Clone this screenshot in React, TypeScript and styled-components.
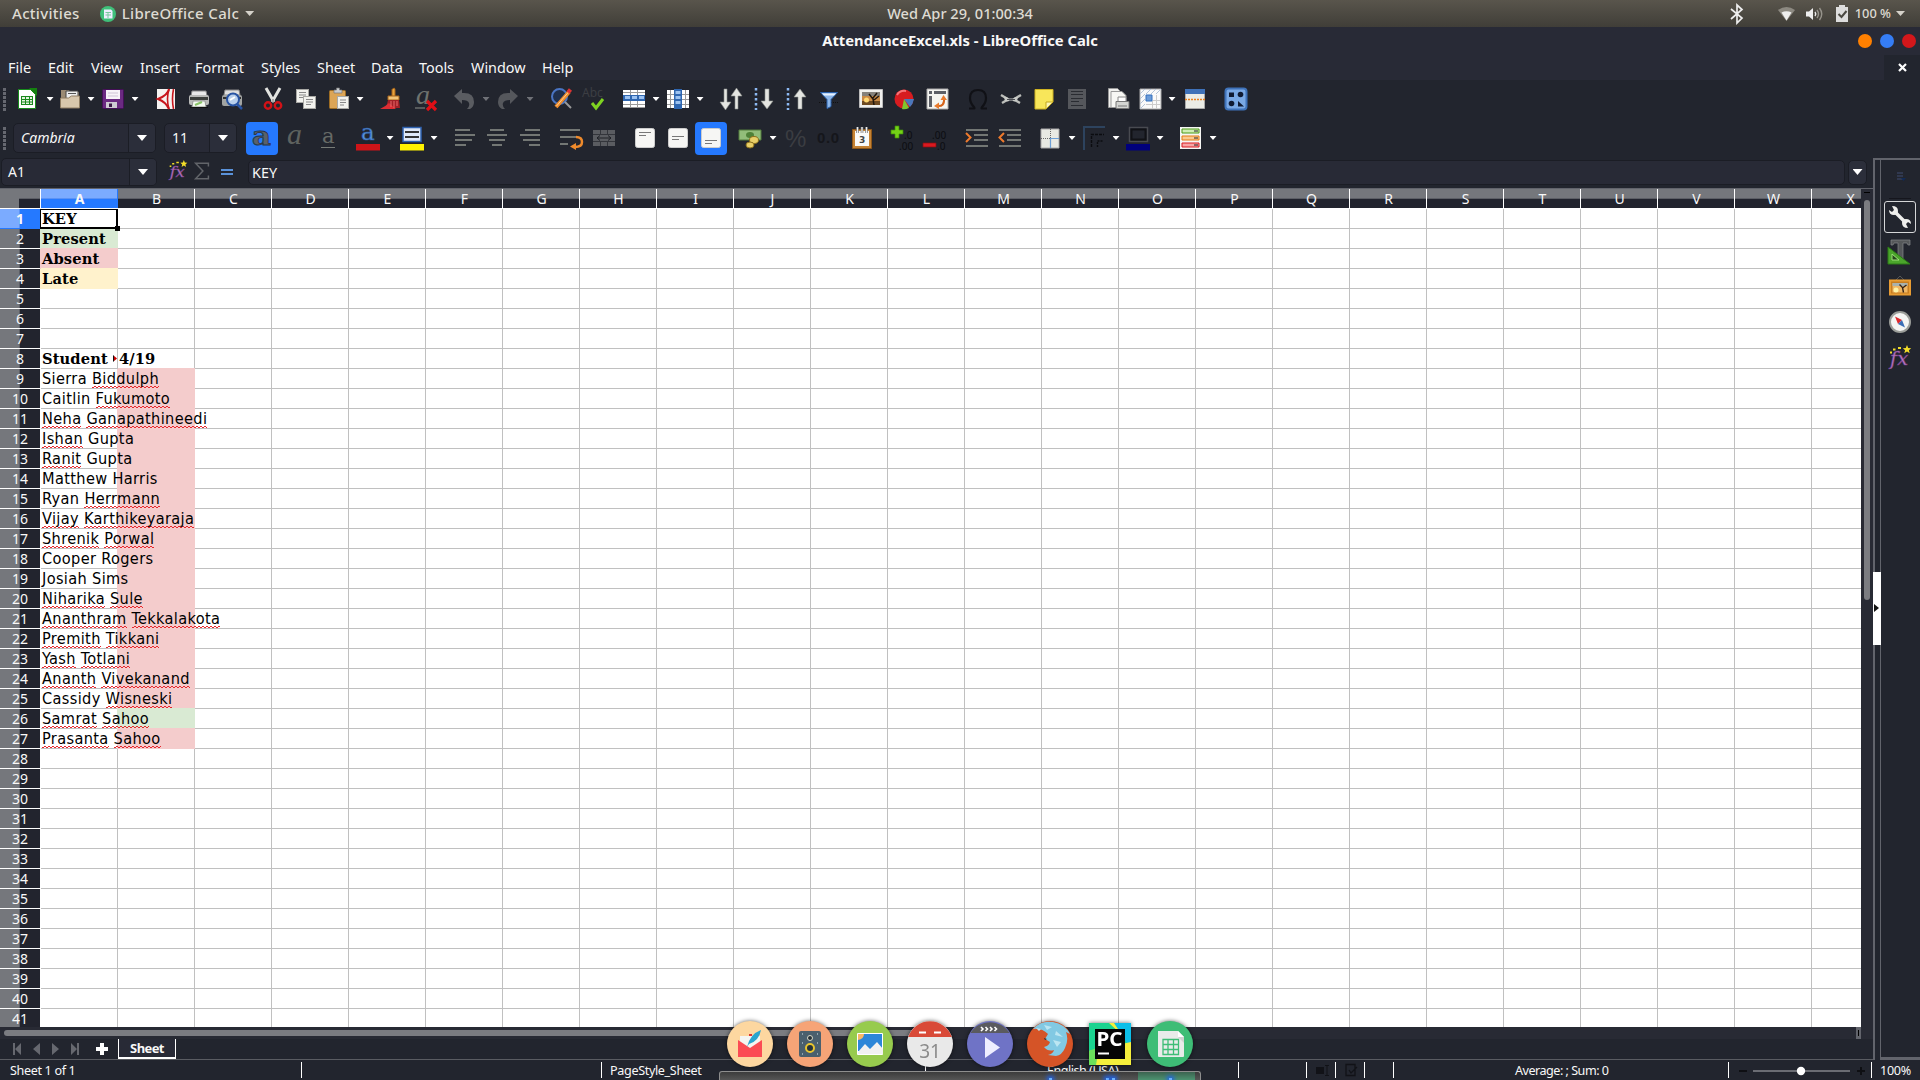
import React from "react";
import styled, { createGlobalStyle, css } from "styled-components";

const ui = `"Noto Sans", "Open Sans", sans-serif`;

const Global = createGlobalStyle`
  * { box-sizing: border-box; }
  body { margin: 0; background: #22252e; overflow: hidden; }
`;

const Desktop = styled.div`
  position: relative;
  width: 1920px;
  height: 1080px;
  overflow: hidden;
  display: flex;
  flex-direction: column;
  background: #22252e;
  color: #f8f8f8;
  font-family: ${ui};
  font-size: 14.6px;
  white-space: pre;
`;

/* ---------- shell bar ---------- */
const ShellBar = styled.header`
  flex: none;
  height: 27px;
  display: grid;
  grid-template-columns: 1fr auto 1fr;
  align-items: center;
  background: linear-gradient(#59554c, #403e38);
  color: #dedbd3;
  font-size: 14px;
  font-weight: 500;
`;
const ShellLeft = styled.div`
  display: flex;
  align-items: center;
  padding-left: 12px;
`;
const ShellText = styled.span<{ $ls?: number; $size?: number }>`
  letter-spacing: ${(p) => p.$ls ?? 0}px;
  font-size: ${(p) => p.$size ?? 14}px;
  line-height: 22px;
  margin-top: -1px;
`;
const ShellRight = styled.div`
  display: flex;
  align-items: center;
  justify-content: flex-end;
  padding-right: 15px;
`;
const Spacer = styled.span<{ $w: number }>`
  flex: none;
  width: ${(p) => p.$w}px;
`;
const Caret = styled.i<{ $w?: number; $h?: number; $c?: string }>`
  flex: none;
  width: ${(p) => p.$w ?? 8}px;
  height: ${(p) => p.$h ?? 5}px;
  background: ${(p) => p.$c ?? "#fff"};
  clip-path: polygon(0 0, 100% 0, 50% 100%);
`;

/* ---------- title and menus ---------- */
const TitleBar = styled.div`
  flex: none;
  height: 28px;
  display: grid;
  grid-template-columns: 1fr auto 1fr;
  align-items: center;
  background: #282a36;
  font-size: 14.8px;
  line-height: 20px;
  font-weight: 700;
`;
const TitleText = styled.span`
  margin-top: -2px;
`;
const Lights = styled.div`
  display: flex;
  justify-content: flex-end;
  gap: 8px;
  padding-right: 4px;
`;
const Light = styled.span<{ $c: string }>`
  width: 14px;
  height: 14px;
  border-radius: 50%;
  background: ${(p) => p.$c};
`;
const MenuBar = styled.nav`
  flex: none;
  height: 25px;
  display: flex;
  align-items: center;
  padding-left: 8px;
  background: #282a36;
`;
const MenuItem = styled.span<{ $w: number }>`
  flex: none;
  width: ${(p) => p.$w}px;
  font-size: 14.4px;
`;
const CloseDoc = styled.span`
  margin-left: auto;
  width: 36px;
  height: 25px;
  display: grid;
  place-items: center;
  background: #22252e;
`;

/* ---------- toolbars ---------- */
const ToolBar = styled.div<{ $h: number }>`
  flex: none;
  height: ${(p) => p.$h}px;
  display: flex;
  align-items: center;
  background: #22252e;
`;
const Grip = styled.span<{ $gap: number }>`
  flex: none;
  width: 3px;
  height: 23px;
  margin: 0 ${(p) => p.$gap}px 0 3px;
  background: repeating-linear-gradient(#666870 0 3px, transparent 3px 4px);
`;
const Tool = styled.span<{ $gap: number }>`
  flex: none;
  width: 24px;
  height: 24px;
  margin-left: ${(p) => p.$gap}px;
  svg { display: block; overflow: visible; }
`;
const Drop = styled.span<{ $gap: number; $dim?: boolean }>`
  flex: none;
  width: 8px;
  display: flex;
  justify-content: center;
  margin-left: ${(p) => p.$gap}px;
  opacity: ${(p) => (p.$dim ? 0.35 : 1)};
`;
const Pressed = styled.span<{ $gap: number }>`
  flex: none;
  width: 32px;
  height: 33px;
  display: grid;
  place-items: center;
  margin-left: ${(p) => p.$gap}px;
  border-radius: 4px;
  background: #2579ff;
  svg { display: block; overflow: visible; }
`;
const Combo = styled.span<{ $w: number; $gap?: number; $h?: number; $btn?: number }>`
  flex: none;
  width: ${(p) => p.$w}px;
  height: ${(p) => p.$h ?? 30}px;
  margin-left: ${(p) => p.$gap ?? 0}px;
  display: grid;
  grid-template-columns: 1fr ${(p) => p.$btn ?? 27}px;
  border: 1px solid #1b1d25;
  border-radius: 5px;
  background: #282a36;
`;
const ComboText = styled.span<{ $italic?: boolean; $pad?: number }>`
  display: flex;
  align-items: center;
  padding-left: ${(p) => p.$pad ?? 7}px;
  font-size: 14px;
  line-height: 20px;
  padding-bottom: 1px;
  font-style: ${(p) => (p.$italic ? "italic" : "normal")};
`;
const ComboButton = styled.span`
  display: flex;
  align-items: center;
  justify-content: center;
  border-left: 1px solid #1b1d25;
  background: #2b2e3a;
  border-radius: 0 4px 4px 0;
`;

/* ---------- work area ---------- */
const Work = styled.div`
  flex: none;
  height: 902px;
  display: flex;
`;
const Left = styled.div`
  width: 1873px;
  display: flex;
  flex-direction: column;
`;
const FormulaBar = styled.div`
  flex: none;
  height: 30px;
  display: flex;
  align-items: center;
  padding: 0 0 1px 1px;
  border-bottom: 1px solid #22252e;
`;
const FormulaInput = styled.span`
  width: 1597px;
  height: 25px;
  margin-left: 5px;
  padding-left: 3px;
  display: flex;
  align-items: center;
  border: 1px solid #1b1d25;
  border-radius: 5px;
  background: #282a36;
  font-size: 14.4px;
`;
const Expand = styled.span`
  width: 19px;
  height: 25px;
  margin-left: 3px;
  display: grid;
  place-items: center;
  border: 1px solid #1b1d25;
  border-radius: 5px;
  background: #2b2e3a;
`;
const SheetRow = styled.div`
  flex: none;
  height: 839px;
  display: flex;
`;
const Sheet = styled.div`
  width: 1861px;
  overflow: hidden;
`;
const ColumnHeads = styled.div`
  height: 21px;
  display: flex;
  border-top: 1px solid #62646c;
  border-bottom: 1px solid #fff;
`;
const steel = css`
  background: linear-gradient(#75777c 0 9px, #5c5e65 9px 10px, #22242e 10px);
`;
const Corner = styled.span`
  flex: none;
  width: 41px;
  border-right: 1px solid #fff;
  background: linear-gradient(90deg, #75777c 19px, transparent 19px), linear-gradient(#75777c 0 9px, #5c5e65 9px 10px, #22242e 10px);
`;
const ColumnHead = styled.span<{ $on?: boolean }>`
  flex: none;
  width: 77px;
  padding-left: 1px;
  border-right: 1px solid #fff;
  text-align: center;
  font-size: 14px;
  line-height: 19px;
  ${steel}
  ${(p) => p.$on && css`
    font-weight: 700;
    border-right-color: #2579ff;
    background: linear-gradient(#7babff 0 9px, #5b92f5 9px 10px, #2579ff 10px);
  `}
`;
const LastHead = styled(ColumnHead)`
  width: 49px;
  border: 0;
  padding-left: 28px;
`;
const Body = styled.div`
  height: 819px;
  display: flex;
  overflow: hidden;
`;
const RowHeads = styled.div`
  flex: none;
  width: 41px;
  border-right: 1px solid #fff;
`;
const RowHead = styled.div<{ $on?: boolean }>`
  height: 20px;
  border-bottom: 1px solid #fff;
  text-align: center;
  font-size: 14px;
  line-height: 19px;
  background: linear-gradient(90deg, #75777c 0 19px, #5c5e65 19px 20px, #22242e 20px);
  ${(p) => p.$on && css`
    font-weight: 700;
    border-bottom-color: #2579ff;
    background: linear-gradient(90deg, #7babff 0 19px, #5b92f5 19px 20px, #2579ff 20px);
  `}
`;
const Grid = styled.div`
  flex: 1;
  background:
    repeating-linear-gradient(90deg, transparent 0 76px, #c0c0c0 76px 77px),
    repeating-linear-gradient(transparent 0 19px, #c0c0c0 19px 20px),
    #fff;
  color: #000;
`;
const GridRow = styled.div`
  height: 20px;
  display: flex;
`;
const Cell = styled.div<{ $fill?: string; $head?: boolean }>`
  position: relative;
  width: 77px;
  height: 20px;
  padding-left: 1px;
  ${(p) => p.$fill && css`
    background: ${p.$fill};
    box-shadow: -1px 0 0 ${p.$fill}, 0 -1px 0 ${p.$fill};
  `}
  ${(p) => p.$head
    ? css`font: 700 14.67px/20px "DejaVu Serif", serif; letter-spacing: 0.12px;`
    : css`font: 16.2px/19px "DejaVu Sans Condensed", "DejaVu Sans", sans-serif; font-stretch: condensed; letter-spacing: 0.35px;`}
`;
const CellText = styled.span`
  position: relative;
  z-index: 1;
`;
const Typo = styled.span`
  display: inline-block;
  height: 20px;
  background:
    linear-gradient(90deg, transparent 2px, #e8262c 2px) 0 17px / 4px 1px repeat-x,
    linear-gradient(90deg, #e8262c 2px, transparent 2px) 0 18px / 4px 1px repeat-x;
`;
const Cursor = styled.span`
  position: absolute;
  z-index: 2;
  left: -1px;
  top: 0;
  width: 78px;
  height: 20px;
  border: 2px solid #000;
  border-top-width: 1px;
  border-left-width: 1px;
  &::after {
    content: "";
    position: absolute;
    right: -4px;
    bottom: -4px;
    width: 5px;
    height: 5px;
    background: #000;
  }
`;
const Cut = styled.span`
  position: absolute;
  right: 1px;
  top: 6px;
  width: 4px;
  height: 7px;
  background: linear-gradient(90deg, #111 1px, #c00 1px);
  clip-path: polygon(0 0, 100% 50%, 0 100%);
`;
const VScroll = styled.div`
  width: 12px;
  padding: 3px;
  background: #282a34;
  border-top: 1px solid #62646c;
`;
const SplitMark = styled.div`
  width: 6px;
  height: 1px;
  margin-bottom: 7px;
  background: #000;
`;
const VThumb = styled.div`
  width: 6px;
  height: 400px;
  border-radius: 3px;
  background: #7b7c81;
`;
const HScroll = styled.div`
  flex: none;
  height: 12px;
  display: flex;
  align-items: center;
  padding-left: 4px;
  background: #282a34;
`;
const HThumb = styled.div`
  width: 916px;
  height: 6px;
  border-radius: 3px;
  background: #7b7c81;
`;
const HSplit = styled.div`
  width: 5px;
  height: 12px;
  margin-left: 936px;
  border: solid #62646c;
  border-width: 3px 2px;
  background: #000;
`;
const Tabs = styled.div`
  flex: none;
  height: 21px;
  display: flex;
  border-bottom: 1px solid #5a5c62;
  svg { display: block; }
`;
const Tab = styled.span`
  width: 58px;
  height: 20px;
  border: 1px solid #fff;
  border-top: 0;
  border-bottom-width: 2px;
  background: #282a36;
  text-align: center;
  font-size: 13px;
  font-weight: 700;
  letter-spacing: -0.6px;
  line-height: 19px;
`;

/* ---------- sidebar ---------- */
const Splitter = styled.div`
  width: 8px;
  display: flex;
  flex-direction: column;
  justify-content: center;
  border-top: 2px solid #62646c;
  border-left: 2px solid #62646c;
  border-right: 1px solid #62646c;
`;
const Handle = styled.div`
  width: 8px;
  height: 73px;
  margin: -4px 0 0 -2px;
  display: flex;
  align-items: center;
  padding-left: 1px;
  background: #fff;
`;
const HandleArrow = styled.i`
  width: 5px;
  height: 8px;
  background: #111;
  clip-path: polygon(0 0, 100% 50%, 0 100%);
`;
const SideBar = styled.aside`
  flex: 1;
  display: flex;
  flex-direction: column;
  align-items: center;
  padding-right: 2px;
  border-top: 2px solid #62646c;
  border-bottom: 3px solid #62646c;
  svg { display: block; overflow: visible; }
`;
const SideItem = styled.span<{ $on?: boolean }>`
  flex: none;
  width: 32px;
  height: 32px;
  margin-bottom: 3px;
  display: grid;
  place-items: center;
  border: 1px solid ${(p) => (p.$on ? "#d5d6d8" : "transparent")};
  border-radius: 3px;
`;
const SideMenu = styled.span`
  height: 39px;
  width: 22px;
  margin-bottom: 2px;
  padding: 12px 0 0 8px;
  border-bottom: 1px solid #15161d;
`;

/* ---------- status bar ---------- */
const Status = styled.footer`
  flex: none;
  height: 20px;
  display: flex;
  align-items: center;
  font-size: 12.6px;
`;
const StatusCell = styled.span<{ $w: number; $pad?: number; $last?: boolean; $ls?: number }>`
  flex: none;
  width: ${(p) => p.$w}px;
  height: 16px;
  line-height: 17px;
  padding-left: ${(p) => p.$pad ?? 0}px;
  letter-spacing: ${(p) => p.$ls ?? 0}px;
  border-right: ${(p) => (p.$last ? 0 : 1)}px solid #fff;
  svg { display: block; }
`;

/* ---------- dock floats over the window ---------- */
const Dock = styled.div`
  position: absolute;
  left: 719px;
  top: 1021px;
  width: 482px;
  height: 59px;
  display: flex;
  flex-direction: column;
`;
const DockIcons = styled.div`
  display: flex;
  gap: 14px;
  padding-left: 8px;
  height: 50px;
  svg { display: block; overflow: visible; filter: drop-shadow(0 0 2px rgba(0, 0, 0, 0.6)); }
`;
const Shelf = styled.div`
  height: 9px;
  display: flex;
  justify-content: flex-end;
  padding-right: 5px;
  border: 1px solid #8e8e8e;
  border-bottom: 0;
  border-radius: 3px 3px 0 0;
  background: linear-gradient(#3c3c3c, #555);
`;
const Active = styled.div`
  width: 57px;
  background: linear-gradient(#3c6350, #4c9370);
`;
const Glow = styled.i<{ $x: number }>`
  position: absolute;
  left: ${(p) => p.$x}px;
  bottom: 0;
  width: 3px;
  height: 2px;
  background: #6db2ff;
  box-shadow: 0 0 4px 2px #1c62ee;
`;

const Ico = ({ children, s = 24 }: { children: React.ReactNode; s?: number }) => (
  <svg width={s} height={s} viewBox="0 0 24 24" fill="none">{children}</svg>
);

const page = (x: number, y: number, w: number, h: number) => (
  <rect x={x} y={y} width={w} height={h} fill="#f2f2ee" stroke="#a9a9a5" />
);

const tools: Record<string, React.ReactNode> = {
  new: <><path d="M3.500 2.500h12l5 5v14h-17z" fill="#fff" stroke="#168a1b" /><path d="M14 1h8v8z" fill="#14800f" /><path d="M6 9h12v9H6z" fill="#1b8a1e" /><path d="M7 10h3v2H7zm4 0h3v2h-3zm4 0h2v2h-2zM7 13h3v1.500H7zm4 0h3v1.500h-3zm4 0h2v1.500h-2zM7 15.500h3V17H7zm4 0h3V17h-3zm4 0h2V17h-2z" fill="#e3f4de" /></>,
  open: <><path d="M3 3h8l1 2h9v15H3z" fill="#9b8a73" /><path d="M8 4h12v8H8z" fill="#eee" stroke="#444" /><path d="M10 6.500h8" stroke="#555" /><path d="M2.500 11h8l3-2h8v12h-19z" fill="#d8c7ac" stroke="#8f7d62" /></>,
  save: <><rect x="1.500" y="2.500" width="21" height="19" rx="1" fill="#6b2a82" stroke="#451058" /><path d="M5 3h14v9H5z" fill="#f7f3f8" /><path d="M7 6h10M7 9h10" stroke="#cfc4d6" /><path d="M5 15h11v6H5z" fill="#cfcbd4" /><path d="M8 16.500h3v3.500H8z" fill="#3c1a49" /></>,
  pdf: <><path d="M3 2h18v20H3z" fill="#f6f3f1" /><path d="M15 2q-1 6-11 10 8 3 11 10" stroke="#c8161c" strokeWidth="2" /><path d="M15 2q-3 10 0 20M19.500 2q-2 10 0 20" stroke="#c8161c" strokeWidth="1.600" /></>,
  print: <><path d="M5 4h14l1 5H4z" fill="#e9e9e9" stroke="#888" /><rect x="2" y="8" width="20" height="10" rx="2" fill="#b9bab8" /><path d="M3 10h18v3H3z" fill="#3c3f3c" /><path d="M6 14h12l1 6H5z" fill="#f4fbf0" stroke="#999" /><path d="M8 18l7-3" stroke="#8cc56b" strokeWidth="2" /><path d="M3 20.500h18" stroke="#111" /></>,
  preview: <><path d="M5 3h14l1 5H4z" fill="#dedede" stroke="#888" /><rect x="2" y="8" width="20" height="11" rx="2" fill="#a2a4a2" /><path d="M3 10h18v2H3z" fill="#333" /><circle cx="13" cy="12.500" r="6" fill="#b8cfec" stroke="#2753a3" strokeWidth="2" /><path d="M17 17l5 5" stroke="#2753a3" strokeWidth="2.500" /><path d="M10 13l5-3" stroke="#fff" strokeWidth="2" /></>,
  cut: <><path d="M5 1l8 14M19 1l-8 14" stroke="#e2e3e0" strokeWidth="3" /><path d="M12 12v3" stroke="#777" /><circle cx="7" cy="18.500" r="3.200" stroke="#d11217" strokeWidth="2.400" /><circle cx="17" cy="18.500" r="3.200" stroke="#d11217" strokeWidth="2.400" /></>,
  copy: <>{page(2.5, 2.5, 12, 13)}<path d="M5 5.500h7M5 8h7M5 10.500h5" stroke="#888" />{page(9.5, 9.5, 12, 12)}<path d="M12 12.500h7M12 15h7M12 17.500h5" stroke="#888" /></>,
  paste: <><rect x="2.500" y="3.500" width="16" height="18" rx="1" fill="#dca556" stroke="#9d6c22" /><path d="M7 5V3h2.500V1h3v2H15v3H7z" fill="#c9ccd0" stroke="#777" strokeWidth=".7" />{page(10.5, 9.5, 11, 12)}<path d="M13 13h6M13 15.500h6M13 18h4" stroke="#888" /></>,
  brush: <><path d="M14 1.500q2-1 2 1v7h-3v-7z" fill="#e9a33b" stroke="#a8651b" /><path d="M9 9h11v4H9z" fill="#f3c477" stroke="#a8651b" /><path d="M9 13h11l1 8H7z" fill="#a12027" /><path d="M1 22q6-3 9-6l7 6z" fill="#dc2d33" /><path d="M12 14v6M15 14v7M18 14v5" stroke="#e8686a" /></>,
  clear: <><text x="2" y="17" fontFamily="Liberation Serif" fontStyle="italic" fontSize="28" fill="#6f736e">a</text><path d="M1 21h10" stroke="#8b908a" /><path d="M13 14l9 9M22 14l-9 9" stroke="#e00f16" strokeWidth="3.200" /></>,
  undo: <path d="M2 9l8-7v4q12-1 12 9 0 5-4 7h-3q3-3 2-6t-7-3v4z" fill="#5a5c61" />,
  redo: <path d="M22 9l-8-7v4q-12-1-12 9 0 5 4 7h3q-3-3-2-6t7-3v4z" fill="#55575c" />,
  find: <><circle cx="9.500" cy="9.500" r="7.500" fill="#20304d" stroke="#4a75c4" strokeWidth="2" /><path d="M15 15l6 6" stroke="#999" strokeWidth="2" /><path d="M6 20L19 5" stroke="#ef8c2c" strokeWidth="4" /><path d="M6.500 19L19 4.500" stroke="#ffcf92" /><path d="M18 5.500l2.500-3" stroke="#d33" strokeWidth="4" /></>,
  spell: <><text x="0" y="10" fontFamily="Noto Sans" fontSize="12" fill="#3c3e43">Abc</text><path d="M10 16l4 5 7-9" stroke="#7ed321" strokeWidth="3" /></>,
  row: <><path d="M1 3h22v18H1z" fill="#fff" /><path d="M1 8h22v6H1z" fill="#2f67b1" /><path d="M3 9h5v3H3zm7 0h5v3h-5zm7 0h5v3h-5z" fill="#9cc2f0" /><path d="M1 5.500h22M1 17.500h22M1 20.500h22M8.500 3v5M15.500 3v5M8.500 14v7M15.500 14v7" stroke="#999" /></>,
  col: <><path d="M1 3h22v18H1z" fill="#fff" /><path d="M8 2h8v20H8z" fill="#2f67b1" /><path d="M9.500 4h5v3h-5zm0 5h5v3h-5zm0 5h5v3h-5z" fill="#9cc2f0" /><path d="M1 7.500h7M1 12.500h7M1 17.500h7M16 7.500h7M16 12.500h7M16 17.500h7M4.500 3v18M19.500 3v18" stroke="#999" /></>,
  sort: <path d="M5 2h3v13h4l-5.500 8L1 15h4zM16 22h3V9h4l-5.500-8L12 9h4z" fill="#e4e5e1" stroke="#8c8e89" strokeWidth=".6" />,
  asc: <><path d="M4 1v22" stroke="#8cb9f2" strokeWidth="2.500" strokeDasharray="2.500 2.500" /><path d="M13 2h4v12h4l-6 8-6-8h4z" fill="#e4e5e1" stroke="#8c8e89" strokeWidth=".6" /></>,
  desc: <><path d="M3 1v22" stroke="#8cb9f2" strokeWidth="2.500" strokeDasharray="2.500 2.500" /><path d="M13 22h4V10h4l-6-8-6 8h4z" fill="#e4e5e1" stroke="#8c8e89" strokeWidth=".6" /></>,
  filter: <><path d="M2 15.500h20" stroke="#111" strokeDasharray="1 1" /><path d="M3.500 5.500h17l-6.500 7v7l-4 2v-9z" fill="#8db7ea" stroke="#2b62ad" /><path d="M5 6.500h14l-2 2H7z" fill="#e6f1ff" /></>,
  image: <><path d="M.5 2.500h23v18H.5z" fill="#f0f0ee" stroke="#bbb" /><path d="M3 5h18v13H3z" fill="#c98a45" /><path d="M3 5h18v4H3z" fill="#85827c" /><path d="M3 14h18v4H3z" fill="#6e4a22" /><circle cx="7.500" cy="13" r="2.500" fill="#ffd873" /><path d="M15 18l-1-6-4-5M14 11l4-5M15 13l5-4" stroke="#20160e" strokeWidth="1.500" /></>,
  chart: <><circle cx="12" cy="12" r="9.500" fill="#d71c20" /><path d="M12 12h10q-1 5-4 8z" fill="#4a78bd" /><path d="M12 12l5 9q-4 2-7 1z" fill="#7ec82e" /><path d="M5 8q3-5 9-4" stroke="#f67478" strokeWidth="2" /></>,
  pivot: <><path d="M2 2h21v20H2z" fill="#f5f5f1" stroke="#aaa" /><path d="M4 4h3v3H4zM9 4h12v3H9zM4 9h3v11H4z" fill="#5c5f66" /><path d="M12 19q8 1 7-8" stroke="#d5631a" strokeWidth="2" /><path d="M15.500 13l3-5 3.500 5zM14 15.500V22l-5-3z" fill="#e87a2c" /></>,
  omega: <path d="M3 21.500h5q1 0 0-1.500Q4 16 4 11q0-8 8-8t8 8q0 5-4 9-1 1.500 0 1.500h5" stroke="#101116" strokeWidth="2.200" />,
  link: <><path d="M2 8l5 3M22 8l-5 3M3 16l5-3M21 16l-5-3" stroke="#bcbeba" strokeWidth="2.400" /><path d="M5 10q3-1 5 1.500h4q2-2.500 5-1.500l-1 4q-3 1-4.500-.5h-3Q9 15 6 14z" fill="#c9cbc7" /><path d="M8 12.500h8" stroke="#4c4e53" /></>,
  note: <><path d="M3 2.500h18V15l-7 7H3z" fill="#f8e65a" stroke="#cfb321" /><path d="M14 22v-7h7z" fill="#fdf6b5" stroke="#c4a71c" /></>,
  header: <><path d="M3 2h18v20H3z" fill="#55575c" /><path d="M6 4.500h12M6 7.500h12M6 11.500h12M6 14.500h8M6 18.500h12" stroke="#2a2c32" strokeWidth="1.200" /></>,
  area: <><path d="M2.500 1.500h9l4 4v15h-13z" fill="#f1f1ee" stroke="#999" /><path d="M5 4.500h11l4 4v12H5z" fill="#f7f7f4" stroke="#999" /><path d="M12 10h8v5h-8z" fill="#fff" stroke="#888" /><path d="M10 14.500h13v7H10z" fill="#d4d5d2" stroke="#777" /><path d="M12 19h9" stroke="#777" /></>,
  freeze: <><path d="M2 2h21v20H2z" fill="#fafafa" stroke="#aaa" /><path d="M2 7l5-5M2 12l5-5M2 17l5-5M2 22l5-5M8 7l5-5M13 7l5-5M18 7l5-5" stroke="#b4c4d8" /><path d="M8 8h6v6H8z" fill="#6b9bd8" stroke="#3570be" /><path d="M15 13.500h8M8 17.500h15M14.500 14v8M18.500 8v14" stroke="#ccc" /></>,
  split: <><path d="M2.500 2.500h19v19h-19z" fill="#ebece6" stroke="#aaa" /><path d="M2 2h20v5H2z" fill="#3e71b8" /><path d="M2 12.500h20" stroke="#e8801e" strokeDasharray="2 1" strokeWidth="1.500" /></>,
  shapes: <><rect x="1.500" y="1.500" width="21" height="21" rx="3" fill="#7aa9e5" stroke="#3f73ba" strokeWidth="2" /><path d="M5 5.500h5V10H5zM14 14l6 5.500h-6z" fill="#101b33" /><circle cx="16.500" cy="7.500" r="2.800" fill="#101b33" /><circle cx="7.500" cy="16.500" r="2.800" fill="#101b33" /></>,
  italic: <text x="4" y="18" fontFamily="Liberation Serif" fontStyle="italic" fontSize="30" fill="#5e625f">a</text>,
  under: <><text x="6" y="17" fontFamily="DejaVu Serif" fontSize="21" fill="#666a66">a</text><path d="M5 21.500h14" stroke="#777b77" /></>,
  color: <><text x="5" y="14" fontFamily="DejaVu Serif" fontSize="23" fill="#5b93dc" stroke="#2d5c9f" strokeWidth=".6">a</text><path d="M0 18h24v6.500H0z" fill="#cf1418" /></>,
  mark: <><rect x="3" y="1.500" width="18" height="14" fill="#dfe9f8" stroke="#2f62b0" strokeWidth="1.500" /><path d="M5 6h14M5 11h14" stroke="#333" strokeWidth="1.800" /><path d="M0 18h24v6.500H0z" fill="#fff200" /></>,
  left: <path d="M2 4h15M2 9h20M2 14h17M2 19h11" stroke="#8e928c" strokeWidth="1.700" />,
  center: <path d="M5 4h14M2 9h20M4 14h16M7 19h10" stroke="#8e928c" strokeWidth="1.700" />,
  right: <path d="M7 4h15M2 9h20M5 14h17M11 19h11" stroke="#8e928c" strokeWidth="1.700" />,
  wrap: <><path d="M1 4h20M1 11h16M1 18h8" stroke="#8e928c" strokeWidth="1.700" /><path d="M17 11q6 0 6 5t-7 5" stroke="#ee8a2c" strokeWidth="2.500" /><path d="M17 17v7l-6-3.500z" fill="#ee8a2c" /></>,
  merge: <><path d="M1 4h22v16H1z" fill="#5a5c61" /><path d="M1 8.500h22M1 15.500h22M8.500 4v4M15.500 4v4M8.500 16v4M15.500 16v4" stroke="#33353b" /><path d="M5 12h14M8 9.500L5 12l3 2.500M16 9.500l3 2.500-3 2.500" stroke="#1f2127" /></>,
  top: <><rect x="2.500" y="2.500" width="19" height="19" rx="2" fill="#f6f6f4" stroke="#ccc" /><path d="M6 6.500h12M6 9.500h7" stroke="#777" /></>,
  middle: <><rect x="2.500" y="2.500" width="19" height="19" rx="2" fill="#f6f6f4" stroke="#ccc" /><path d="M6 10.500h12M6 13.500h7" stroke="#777" /></>,
  bottom: <><rect x="2.500" y="2.500" width="19" height="19" rx="2" fill="#f6f6f4" stroke="#ccc" /><path d="M6 14.500h12M6 17.500h7" stroke="#777" /></>,
  money: <><path d="M1 4h22v10H1z" fill="#92bd7a" stroke="#527d3c" /><ellipse cx="12" cy="9" rx="4" ry="3" fill="#4f8138" /><ellipse cx="16" cy="14" rx="4.500" ry="3.500" fill="#e9cf68" stroke="#8b6f1d" /><ellipse cx="12" cy="19" rx="4" ry="3" fill="#e9cf68" stroke="#8b6f1d" /></>,
  percent: <text x="1" y="21" fontFamily="Liberation Sans" fontSize="24" fill="#3b3d42">%</text>,
  number: <text x="1" y="17" fontFamily="Liberation Sans" fontSize="15" fontWeight="700" fill="#15161b" textLength="22">0.0</text>,
  date: <><path d="M2.500 3.500h19v19h-19z" fill="#c68334" stroke="#8d5618" /><path d="M5 5h14v15H5z" fill="#fafaf8" /><path d="M7.500 1v6M12 1v6M16.500 1v6" stroke="#777" strokeWidth="2.600" /><path d="M7.500 1v6M12 1v6M16.500 1v6" stroke="#eee" strokeWidth="1.200" /><text x="9" y="17" fontFamily="DejaVu Sans" fontWeight="700" fontSize="9" fill="#444">3</text></>,
  addDec: <><path d="M5 0h4v4h4v4H9v4H5V8H1V4h4z" fill="#74d216" stroke="#3d8c06" strokeWidth=".7" /><text x="14" y="13" fontSize="10" fill="#0c0d11" fontFamily="Noto Sans">.0</text><text x="9" y="24" fontSize="10" fill="#0c0d11" fontFamily="Noto Sans">.00</text></>,
  delDec: <><path d="M0 17h13v4H0z" fill="#d91920" stroke="#8c0b10" strokeWidth=".7" /><text x="9" y="13" fontSize="10" fill="#0c0d11" fontFamily="Noto Sans">.00</text><text x="14" y="24" fontSize="10" fill="#0c0d11" fontFamily="Noto Sans">.0</text></>,
  indent: <><path d="M1 4h22M9 9h14M9 14h14M1 20h22" stroke="#8e928c" strokeWidth="1.700" /><path d="M1 7l4.500 4.500L1 16" stroke="#ee7a2c" strokeWidth="2" /></>,
  outdent: <><path d="M1 4h22M9 9h14M9 14h14M1 20h22" stroke="#8e928c" strokeWidth="1.700" /><path d="M6 7l-4.500 4.500L6 16" stroke="#ee7a2c" strokeWidth="2" /></>,
  border: <><path d="M3 3h18v19H3z" fill="#e8e9e3" stroke="#aaa" /><path d="M3 12.500h9M12.500 3v9" stroke="#666" strokeDasharray="1 1" /><path d="M12.500 22v-9.500H21" stroke="#6d9fd6" strokeWidth="1.200" /></>,
  line: <><path d="M2 24V1h21" stroke="#2d435e" strokeWidth="2" /><path d="M9.500 21V8.500H22" stroke="#0b0c10" strokeWidth="1.400" strokeDasharray="3 1" /><path d="M15.500 21v-6H21" stroke="#0b0c10" strokeWidth="1.400" strokeDasharray="2 1" /></>,
  edge: <><path d="M3.500 1.500h18v14h-18z" fill="#22252e" stroke="#484a50" strokeWidth="1.500" /><path d="M5.500 3.500h14v10h-14z" stroke="#111216" strokeWidth="2" /><path d="M0 18h24v6.500H0z" fill="#00007c" /></>,
  cond: <><path d="M2 1h21v22H2z" fill="#f6f6f4" /><path d="M4 3h17v4H4z" fill="#cfeeb5" stroke="#4d9a17" /><path d="M4 10h17v4H4z" fill="#fbc98f" stroke="#e37a14" /><path d="M4 17h17v4H4z" fill="#f8a5a5" stroke="#d91c22" /><path d="M16 5h4M16 12h4M16 19h4" stroke="#222" /></>,
  bold: <text x="2" y="19" fontFamily="DejaVu Serif" fontWeight="700" fontSize="26" fill="#59616a" stroke="#273447" strokeWidth=".8" textLength="19" lengthAdjust="spacingAndGlyphs">a</text>,
  fx: <><text x="2" y="20" fontFamily="DejaVu Serif" fontStyle="italic" fontSize="18" fill="#b87cc4" stroke="#7b3f89" strokeWidth=".5" textLength="18" lengthAdjust="spacingAndGlyphs">fx</text><path d="M2 7.500h2M5 4.500h2.500M10 3h3" stroke="#f3dd28" strokeWidth="2" /><path d="M19 0l1.200 3 3 .3-2.300 2 .8 3L19 6.600 16.300 8.300l.8-3-2.300-2 3-.3z" fill="#f3dd28" /></>,
  sigma: <path d="M19 7V3.500H5L13 12 5 20.500h14V17" stroke="#62656a" strokeWidth="1.600" />,
  equals: <path d="M3 9h18M3 15h18" stroke="#5a92da" strokeWidth="3" />,
};

type Item = [string, number] | [string, number, "dim"];
const standard: Item[] = [
  ["new", 6], ["v", 7], ["open", 4], ["v", 5], ["save", 6], ["v", 6], ["pdf", 15], ["print", 9], ["preview", 9],
  ["cut", 17], ["copy", 9], ["paste", 9], ["v", 5], ["brush", 15], ["clear", 11], ["undo", 14], ["v", 6, "dim"],
  ["redo", 6], ["v", 6, "dim"], ["find", 16], ["spell", 8], ["row", 16], ["v", 6], ["col", 6], ["v", 6], ["sort", 15],
  ["asc", 9], ["desc", 9], ["filter", 8], ["image", 18], ["chart", 9], ["pivot", 9], ["omega", 17], ["link", 9],
  ["note", 9], ["header", 9], ["area", 17], ["freeze", 8], ["v", 6], ["split", 7], ["shapes", 17],
];
const formatting: Item[] = [
  ["bold!", 9], ["italic", 5], ["under", 9], ["color", 16], ["v", 6], ["mark", 6], ["v", 6], ["left", 15],
  ["center", 8], ["right", 9], ["wrap", 17], ["merge", 9], ["top", 17], ["middle", 9], ["bottom!", 5], ["money", 11],
  ["v", 7], ["percent", 7], ["number", 8], ["date", 10], ["addDec", 16], ["delDec", 9], ["indent", 18],
  ["outdent", 9], ["border", 16], ["v", 6], ["line", 6], ["v", 6], ["edge", 6], ["v", 6], ["cond", 14], ["v", 7],
];

const Tools = ({ items }: { items: Item[] }) => (
  <>
    {items.map(([name, gap, dim], i) =>
      name === "v" ? (
        <Drop key={i} $gap={gap} $dim={!!dim}><Caret $w={7} $h={4} /></Drop>
      ) : name.endsWith("!") ? (
        <Pressed key={i} $gap={gap}><Ico>{tools[name.slice(0, -1)]}</Ico></Pressed>
      ) : (
        <Tool key={i} $gap={gap}><Ico>{tools[name]}</Ico></Tool>
      )
    )}
  </>
);

const menus: [string, number][] = [
  ["File", 40], ["Edit", 43], ["View", 49], ["Insert", 55], ["Format", 66], ["Styles", 56],
  ["Sheet", 54], ["Data", 48], ["Tools", 52], ["Window", 71], ["Help", 40],
];

const red = "#f4cccc", green = "#d9ead3", yellow = "#fff2cc";

/* Words wrapped in underscores are flagged by the spell checker. */
const students = [
  "Sierra _Biddulph_", "Caitlin _Fukumoto_", "_Neha_ _Ganapathineedi_", "_Ishan_ Gupta", "_Ranit_ Gupta",
  "Matthew Harris", "Ryan _Herrmann_", "_Vijay_ _Karthikeyaraja_", "_Shrenik_ _Porwal_", "Cooper Rogers",
  "Josiah Sims", "_Niharika_ _Sule_", "_Ananthram_ _Tekkalakota_", "_Premith_ _Tikkani_", "_Yash_ _Totlani_",
  "_Ananth_ _Vivekanand_", "Cassidy _Wisneski_", "_Samrat_ _Sahoo_", "_Prasanta_ _Sahoo_",
];
const Name = ({ text }: { text: string }) => (
  <CellText>
    {text.split("_").map((part, i) => (i % 2 ? <Typo key={i}>{part}</Typo> : part))}
  </CellText>
);

const Nav = () => (
  <svg width="118" height="20" viewBox="0 0 118 20">
    <path d="M13 4h2v12h-2zM21 4v12l-6-6zM40 4v12l-7-6zM52 4v12l7-6zM71 4v12l6-6zM77 4h2v12h-2z" fill="#66686f" />
    <path d="M100 4h4v4h4v4h-4v4h-4v-4h-4V8h4z" fill="#fff" />
  </svg>
);

const Disc = ({ c, children }: { c: string; children: React.ReactNode }) => (
  <svg width="46" height="46" viewBox="0 0 46 46"><circle cx="23" cy="23" r="23" fill={c} />{children}</svg>
);

const DockApps = () => (
  <DockIcons>
    <Disc c="#fdd7a0">
      <path d="M13 15h20v14H13z" fill="#f5f5f2" /><path d="M11 19l12 8 12-8v17H11z" fill="#fb4b54" />
      <path d="M22 14h3" stroke="#d33" strokeWidth="2" /><path d="M20 26q3-13 14-17-2 11-12 14z" fill="#2aa5cf" />
    </Disc>
    <Disc c="#f6a477">
      <rect x="12" y="10" width="22" height="26" rx="2" fill="#4a5f6d" />
      <circle cx="23" cy="17" r="2.500" fill="#26323a" stroke="#d9d9c8" />
      <circle cx="23" cy="27" r="4" fill="#26323a" stroke="#e9c52f" strokeWidth="2" />
      <path d="M15 13h1M30 13h1M15 33h1M30 33h1M15 22h1M30 22h1" stroke="#91a3ad" strokeWidth="2" />
    </Disc>
    <Disc c="#97cb4e">
      <rect x="10" y="12" width="26" height="22" rx="1" fill="#fff" /><path d="M11 13h24v17H11z" fill="#2c86d8" />
      <path d="M11 13h6q0 5-6 6z" fill="#f8b765" /><path d="M11 31l7-8 5 5 7-7 6 7v5H11z" fill="#f1f1f1" />
    </Disc>
    <svg width="46" height="46" viewBox="0 0 46 46">
      <circle cx="23" cy="23" r="23" fill="#e9e9e9" /><path d="M1.200 16a23 23 0 0 1 43.600 0z" fill="#d94a38" />
      <path d="M12 11.500h7M27 11.500h7" stroke="#fff" strokeWidth="2" />
      <text x="23" y="37" textAnchor="middle" fontFamily="Noto Sans" fontSize="19" fill="#8b8b8b">31</text>
    </svg>
    <svg width="46" height="46" viewBox="0 0 46 46">
      <circle cx="23" cy="23" r="23" fill="#6f73c6" /><path d="M3.500 12a23 23 0 0 1 39 0z" fill="#5a5a5f" />
      <path d="M14 6l2 2-2 2M18.500 6l2 2-2 2M23 6l2 2-2 2M27.500 6l2 2-2 2" stroke="#fff" strokeWidth="1.600" fill="none" />
      <path d="M18 16l15 10.500L18 37z" fill="#eef" />
    </svg>
    <Disc c="#d55427">
      <path d="M6 8Q14-1 26 1q12 2 17 12l-4-2q3 8-1 16-3 7-9 8l-8-1q5-1 6-5-6 2-10-3 5-1 6-5l-5-3 3-5q-6-6-15-5z" fill="#82c9e3" />
      <path d="M9 7l5 1-2 2zM17 4l8 2-5 3zM29 10l7 6-8-2zM26 19l8 2-4 5z" fill="#bce6f2" />
      <path d="M17 17l3 1-2 1z" fill="#222" />
    </Disc>
    <svg width="46" height="46" viewBox="0 0 46 46">
      <path d="M2 2h42v42H2z" fill="#1bd390" /><path d="M27 2h17v26z" fill="#0dbfe9" /><path d="M22 2h5l8 12zM2 30v14h42V21z" fill="#f5ef3c" /><path d="M2 30l10-4-3 18H2z" fill="#6be05b" />
      <path d="M8 8h30v30H8z" fill="#050505" /><path d="M11 32.500h11" stroke="#fff" strokeWidth="2" />
      <text x="9.500" y="25" fontFamily="Noto Sans" fontWeight="700" fontSize="19" fill="#fff" textLength="26" lengthAdjust="spacingAndGlyphs">PC</text>
    </svg>
    <Disc c="#3ebd76">
      <path d="M11 10h20l6 6v19q0 1-1 1H12q-1 0-1-1z" fill="#e9ebea" /><path d="M31 10v6h6z" fill="#fff" /><path d="M31 16h6v6z" fill="#cfd3d1" />
      <path d="M16 18.500h15.500v15H16zM16 23.500h15.500M16 28.500h15.500M21 18.500v15M26.500 18.500v15" fill="none" stroke="#3ebd76" strokeWidth="1.300" />
    </Disc>
  </DockIcons>
);

export default function App() {
  return (
    <Desktop>
      <Global />
      <ShellBar>
        <ShellLeft>
          <ShellText $size={15} $ls={0.3}>Activities</ShellText>
          <Spacer $w={20} />
          <svg width="16" height="16" viewBox="0 0 16 16"><circle cx="8" cy="8" r="8" fill="#3fbf79" /><path d="M4 3.500h7l1.500 1.500v7.500H4z" fill="#eef" /><path d="M5.500 6.500h5.500M5.500 9h5.500M8 6v6" stroke="#7bc8a0" /></svg>
          <Spacer $w={6} />
          <ShellText $size={15} $ls={0.35}>LibreOffice Calc</ShellText>
          <Spacer $w={6} />
          <Caret $w={9} $h={5} $c="#d5d2ca" />
        </ShellLeft>
        <ShellText $size={14.6}>Wed Apr 29, 01:00:34</ShellText>
        <ShellRight>
          <svg width="14" height="22" viewBox="0 0 14 22"><path d="M1 6l11 9-5 5V2l5 4.500L1 16" fill="none" stroke="#eee" strokeWidth="1.700" /></svg>
          <Spacer $w={34} />
          <svg width="17" height="14" viewBox="0 0 17 14"><path d="M0 3q8.500-6 17 0L8.500 14z" fill="#8c8981" /><path d="M3.500 5.500q5-2.500 10 0l-5 8z" fill="#eee" /></svg>
          <Spacer $w={11} />
          <svg width="17" height="14" viewBox="0 0 17 14"><path d="M0 4.500h3L7 1v12L3 9.500H0z" fill="#eee" /><path d="M9 5q1.500 2 0 4" stroke="#eee" fill="none" strokeWidth="1.400" /><path d="M11 3q3 4 0 8M13.500 1q4.500 6 0 12" stroke="#96938b" fill="none" strokeWidth="1.400" /></svg>
          <Spacer $w={13} />
          <svg width="12" height="17" viewBox="0 0 12 17"><path d="M3 0h6v2h3v15H0V2h3z" fill="#ddd" /><path d="M2.500 9l3 3 5-6" stroke="#4b4942" strokeWidth="2" fill="none" /></svg>
          <Spacer $w={7} />
          <ShellText $size={12.8}>100 %</ShellText>
          <Spacer $w={5} />
          <Caret $w={9} $h={5} $c="#d5d2ca" />
        </ShellRight>
      </ShellBar>
      <TitleBar>
        <span />
        <TitleText>AttendanceExcel.xls - LibreOffice Calc</TitleText>
        <Lights><Light $c="#ff8000" /><Light $c="#357df5" /><Light $c="#d3171b" /></Lights>
      </TitleBar>
      <MenuBar>
        {menus.map(([m, w]) => <MenuItem key={m} $w={w}>{m}</MenuItem>)}
        <CloseDoc><svg width="9" height="9" viewBox="0 0 9 9"><path d="M1 1l7 7M8 1L1 8" stroke="#fff" strokeWidth="2.200" /></svg></CloseDoc>
      </MenuBar>
      <ToolBar $h={38}><Grip $gap={3} /><Tools items={standard} /></ToolBar>
      <ToolBar $h={40}>
        <Grip $gap={7} />
        <Combo $w={143}><ComboText $italic>Cambria</ComboText><ComboButton><Caret $w={10} $h={6} /></ComboButton></Combo>
        <Combo $w={73} $gap={8}><ComboText>11</ComboText><ComboButton><Caret $w={10} $h={6} /></ComboButton></Combo>
        <Tools items={formatting} />
      </ToolBar>
      <Work>
        <Left>
          <FormulaBar>
            <Combo $w={156} $h={28}><ComboText $pad={6}>A1</ComboText><ComboButton><Caret $w={10} $h={6} /></ComboButton></Combo>
            <Tool $gap={11}><Ico s={20}>{tools.fx}</Ico></Tool>
            <Tool $gap={-1}><Ico s={22}>{tools.sigma}</Ico></Tool>
            <Tool $gap={4}><Ico s={16}><g transform="translate(0 6)">{tools.equals}</g></Ico></Tool>
            <FormulaInput>KEY</FormulaInput>
            <Expand><Caret $w={10} $h={6} /></Expand>
          </FormulaBar>
          <SheetRow>
            <Sheet>
              <ColumnHeads>
                <Corner />
                {[..."ABCDEFGHIJKLMNOPQRSTUVW"].map((c) => <ColumnHead key={c} $on={c === "A"}>{c}</ColumnHead>)}
                <LastHead>X</LastHead>
              </ColumnHeads>
              <Body>
                <RowHeads>
                  {Array.from({ length: 41 }, (_, i) => <RowHead key={i} $on={i === 0}>{i + 1}</RowHead>)}
                </RowHeads>
                <Grid>
                  <GridRow><Cell $head>KEY<Cursor /></Cell></GridRow>
                  <GridRow><Cell $head $fill={green}>Present</Cell></GridRow>
                  <GridRow><Cell $head $fill={red}>Absent</Cell></GridRow>
                  <GridRow><Cell $head $fill={yellow}>Late</Cell></GridRow>
                  <GridRow /><GridRow /><GridRow />
                  <GridRow><Cell $head>Student<Cut /></Cell><Cell $head>4/19</Cell></GridRow>
                  {students.map((s) => (
                    <GridRow key={s}>
                      <Cell><Name text={s} /></Cell>
                      <Cell $fill={s.includes("Samrat") ? green : red} />
                    </GridRow>
                  ))}
                </Grid>
              </Body>
            </Sheet>
            <VScroll><SplitMark /><VThumb /></VScroll>
          </SheetRow>
          <HScroll><HThumb /><HSplit /></HScroll>
          <Tabs><Nav /><Tab>Sheet</Tab></Tabs>
        </Left>
        <Splitter><Handle><HandleArrow /></Handle></Splitter>
        <SideBar>
          <SideMenu><svg width="9" height="9" viewBox="0 0 9 9"><path d="M0 1h6M0 4h6M0 7h6" stroke="#3e4d70" /><path d="M4 6h5L6.500 9z" fill="#112a55" /></svg></SideMenu>
          <SideItem $on><Ico><path d="M7 7l10 10" stroke="#eeeeec" strokeWidth="3.400" /><path d="M4 1l2 4-2 2-3-2q0 5 5 5 4 0 4-4 0-5-6-5zM20 23l-2-4 2-2 3 2q0-5-5-5-4 0-4 4 0 5 6 5z" fill="#eeeeec" /></Ico></SideItem>
          <SideItem><Ico><path d="M3 0h19v5h-2l-1-2h-4v16h-5V3H6L5 5H3z" fill="#55585a" stroke="#85888a" strokeWidth=".7" /><path d="M0 7l22 17H0z" fill="#4ba52c" stroke="#2b7a14" /><path d="M4 14l7 6H4z" fill="#26471c" stroke="#9be077" /></Ico></SideItem>
          <SideItem><Ico><path d="M8 5l4-4 4 4" stroke="#555" /><path d="M2 5.500h20v14H2z" fill="#c77d20" stroke="#e89c33" strokeWidth="2" /><path d="M4.500 8h15v9.500h-15z" fill="#efb765" /><path d="M4.500 8h15v3h-15z" fill="#a9b2ae" /><circle cx="8" cy="15" r="2.500" fill="#fff3a6" /><path d="M15.500 17.500l-1-5-3-3M14.500 13l4-3" stroke="#33231a" strokeWidth="1.400" /></Ico></SideItem>
          <SideItem><Ico><circle cx="12" cy="12" r="10" fill="#f5f5f3" stroke="#9b9d99" strokeWidth="2" /><path d="M7 6.500l7 3.500-4 4z" fill="#de2a2f" /><path d="M17 17.500L10 14l4-4z" fill="#3c6eb6" /></Ico></SideItem>
          <SideItem><Ico>{tools.fx}</Ico></SideItem>
        </SideBar>
      </Work>
      <Status>
        <StatusCell $w={302} $pad={10} $ls={-0.35}>Sheet 1 of 1</StatusCell>
        <StatusCell $w={300} />
        <StatusCell $w={324} $pad={8} $ls={-0.35}>PageStyle_Sheet</StatusCell>
        <StatusCell $w={313} $pad={121} $ls={-0.5}>English (USA)</StatusCell>
        <StatusCell $w={68} />
        <StatusCell $w={29} $pad={9}><svg width="13" height="16" viewBox="0 0 13 16"><path d="M0 5h8v7H0z" fill="#111217" /><path d="M9 3.500h4M11 3v11M9 13.500h4" stroke="#111217" /></svg></StatusCell>
        <StatusCell $w={29} $pad={9}><svg width="13" height="16" viewBox="0 0 13 16"><path d="M1 2.500h9v11H1zM4 8l2 3 6-6" fill="none" stroke="#111217" strokeWidth="1.300" /></svg></StatusCell>
        <StatusCell $w={29} />
        <StatusCell $w={335} $pad={121} $ls={-0.5}>Average: ; Sum: 0</StatusCell>
        <StatusCell $w={143} $pad={9}>
          <svg width="132" height="16" viewBox="0 0 132 16"><path d="M1 9h8M119 9h8M123 5v8" stroke="#0e0f13" strokeWidth="2" /><path d="M15 9h97" stroke="#6a6c73" strokeWidth="2" /><circle cx="63" cy="9" r="4.200" fill="#fff" /></svg>
        </StatusCell>
        <StatusCell $w={48} $pad={8} $ls={-0.3} $last>100%</StatusCell>
      </Status>
      <Dock>
        <DockApps />
        <Shelf><Active /></Shelf>
        <Glow $x={330} /><Glow $x={387} /><Glow $x={393} /><Glow $x={450} />
      </Dock>
    </Desktop>
  );
}
